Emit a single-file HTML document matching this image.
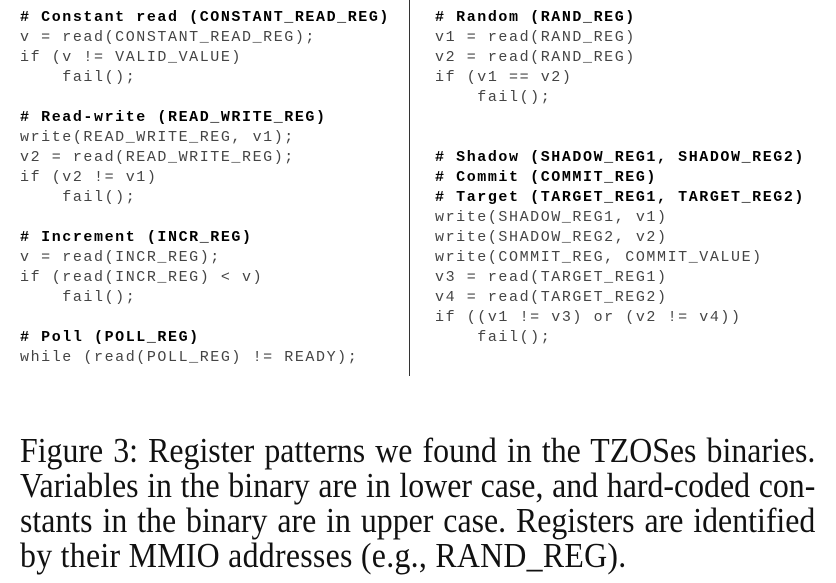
<!DOCTYPE html>
<html><head><meta charset="utf-8"><style>
html,body{margin:0;padding:0;background:#fff;width:836px;height:583px;overflow:hidden;position:relative}
pre{position:absolute;top:8px;margin:0;font-family:"Liberation Mono",monospace;font-size:15px;line-height:20px;letter-spacing:1.57px;color:#444}
pre b{color:#000}
.l{left:20px}.r{left:435px}
.div{position:absolute;left:409px;top:0;width:1px;height:376px;background:#333}
.cap{position:absolute;left:20px;top:433px;font-family:"Liberation Serif",serif;font-size:35px;line-height:35px;color:#111}
.cap div{width:874px;transform:scaleX(0.91);transform-origin:0 0;white-space:nowrap;text-align:justify;text-align-last:justify}
.cap div.last{text-align-last:left;letter-spacing:0.3px}
</style></head><body>
<pre class="l"><b># Constant read (CONSTANT_READ_REG)</b>
v = read(CONSTANT_READ_REG);
if (v != VALID_VALUE)
    fail();

<b># Read-write (READ_WRITE_REG)</b>
write(READ_WRITE_REG, v1);
v2 = read(READ_WRITE_REG);
if (v2 != v1)
    fail();

<b># Increment (INCR_REG)</b>
v = read(INCR_REG);
if (read(INCR_REG) &lt; v)
    fail();

<b># Poll (POLL_REG)</b>
while (read(POLL_REG) != READY);</pre>
<div class="div"></div>
<pre class="r"><b># Random (RAND_REG)</b>
v1 = read(RAND_REG)
v2 = read(RAND_REG)
if (v1 == v2)
    fail();


<b># Shadow (SHADOW_REG1, SHADOW_REG2)</b>
<b># Commit (COMMIT_REG)</b>
<b># Target (TARGET_REG1, TARGET_REG2)</b>
write(SHADOW_REG1, v1)
write(SHADOW_REG2, v2)
write(COMMIT_REG, COMMIT_VALUE)
v3 = read(TARGET_REG1)
v4 = read(TARGET_REG2)
if ((v1 != v3) or (v2 != v4))
    fail();</pre>
<div class="cap">
<div>Figure 3: Register patterns we found in the TZOSes binaries.</div>
<div>Variables in the binary are in lower case, and hard-coded con-</div>
<div>stants in the binary are in upper case. Registers are identified</div>
<div class="last">by their MMIO addresses (e.g., RAND_REG).</div>
</div>
</body></html>
